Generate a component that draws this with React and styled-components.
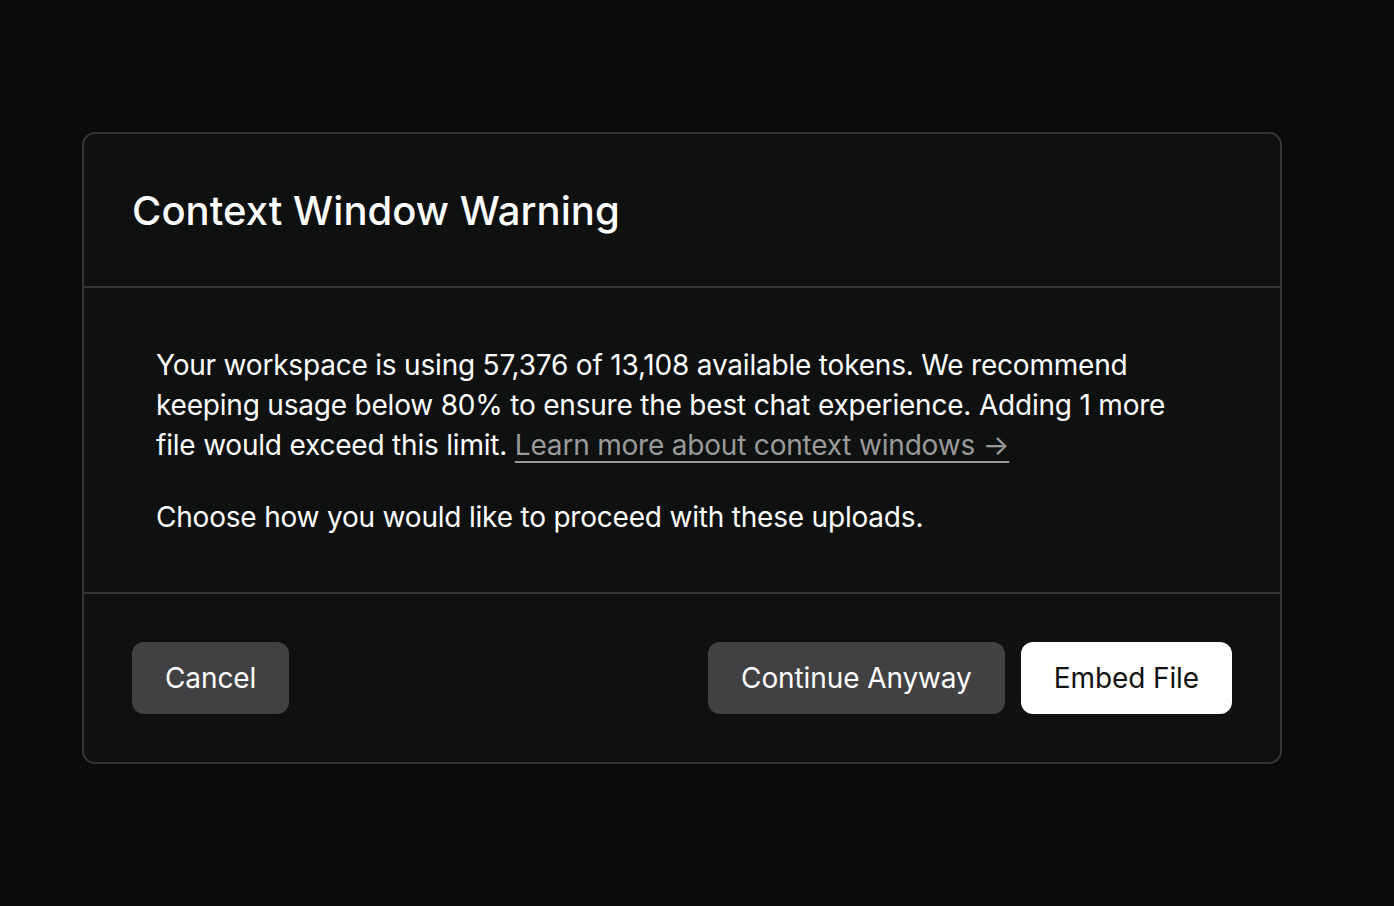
import React from "react";
import styled, { createGlobalStyle } from "styled-components";

const GlobalStyle = createGlobalStyle`
  html, body {
    margin: 0;
    padding: 0;
    background: #0b0b0b;
    font-family: Inter, "Noto Sans", sans-serif;
  }
`;

const Page = styled.div`
  min-height: 906px;
  padding: 132px 112px 0 82px;
  box-sizing: border-box;
`;

const Dialog = styled.div`
  width: 1200px;
  background: #0f1111;
  border: 2px solid #343535;
  border-radius: 13px;
  box-sizing: border-box;
`;

const Header = styled.div`
  height: 152px;
  display: flex;
  align-items: center;
  padding: 0 48px;
  border-bottom: 2px solid #343535;
`;

const Title = styled.h1`
  margin: 0;
  font-size: 40px;
  font-weight: 500;
  color: #fff;
  letter-spacing: 0.05px;
`;

const Body = styled.div`
  padding: 57px 72px 55px;
  border-bottom: 2px solid #343535;
  color: #fff;
  font-size: 28px;
  line-height: 40px;
  letter-spacing: -0.2px;

  p {
    margin: 0 0 32px;
  }
  p:last-child {
    margin: 0;
  }
`;

const Link = styled.a`
  color: #9a9a9a;
  text-decoration: underline;
  text-underline-offset: 6px;
  text-decoration-thickness: 2px;
`;

const Footer = styled.div`
  display: flex;
  align-items: center;
  padding: 48px;
  gap: 16px;
`;

const Spacer = styled.div`
  flex: 1;
`;

const Button = styled.button`
  height: 72px;
  padding: 0 33px;
  border: none;
  border-radius: 12px;
  font-family: inherit;
  font-size: 28px;
  letter-spacing: -0.1px;
  background: ${(p) => (p.$primary ? "#ffffff" : "#414143")};
  color: ${(p) => (p.$primary ? "#111" : "#fff")};
  cursor: pointer;
`;

export default function App() {
  return (
    <>
      <GlobalStyle />
      <Page>
        <Dialog>
          <Header>
            <Title>Context Window Warning</Title>
          </Header>
          <Body>
            <p>
              Your workspace is using 57,376 of 13,108 available tokens. We
              recommend keeping usage below 80% to ensure the best chat
              experience. Adding 1 more file would exceed this limit.{" "}
              <Link href="#">Learn more about context windows →</Link>
            </p>
            <p>Choose how you would like to proceed with these uploads.</p>
          </Body>
          <Footer>
            <Button>Cancel</Button>
            <Spacer />
            <Button>Continue Anyway</Button>
            <Button $primary>Embed File</Button>
          </Footer>
        </Dialog>
      </Page>
    </>
  );
}
